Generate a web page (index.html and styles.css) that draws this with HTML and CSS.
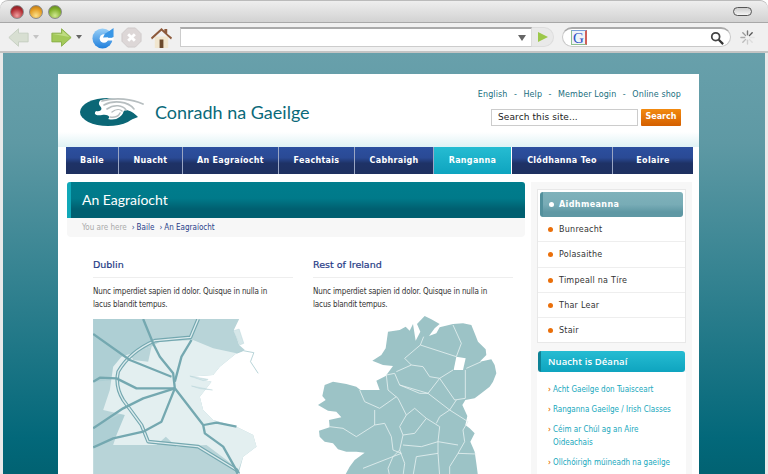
FILE: index.html
```html
<!DOCTYPE html>
<html lang="ga">
<head>
<meta charset="utf-8">
<title>Conradh na Gaeilge</title>
<link rel="stylesheet" href="styles.css">
</head>
<body>
<div class="window">
  <div class="titlebar">
    <div class="lights"><span class="light red"></span><span class="light amber"></span><span class="light green"></span></div>
    <span class="pill"></span>
  </div>
  <div class="toolbar">
    <svg class="tool tool-back" viewBox="0 0 24 24"><path d="M1 12 12 2v5h11v10H12v5z" fill="#d8dfd2" stroke="#c4cdbf"/></svg>
    <span class="caret caret-off"></span>
    <svg class="tool tool-fwd" viewBox="0 0 24 24"><path d="M23 12 12 2v5H1v10h11v5z" fill="#a3c95a" stroke="#86ad45"/><path d="M2 8h11V4l8 7.500z" fill="#bfdc83"/></svg>
    <span class="caret"></span>
    <svg class="tool tool-reload" viewBox="0 0 22 24">
      <defs><linearGradient id="rl" x1="0" y1="0" x2="0" y2="1"><stop offset="0" stop-color="#9ad0f7"/><stop offset="1" stop-color="#1f7fdc"/></linearGradient></defs>
      <circle cx="10.500" cy="13" r="10.500" fill="url(#rl)"/>
      <circle cx="12" cy="13" r="4.500" fill="#fff"/>
      <path d="M11 12 22 11.500V2l-4 3-5 3z" fill="#3a97e6"/>
      <path d="M9 12.500h13v2.500H9z" fill="#fff"/>
    </svg>
    <svg class="tool tool-stop" viewBox="0 0 22 22"><path d="M7 1h8l6 6v8l-6 6H7l-6-6V7z" fill="#ddd7d7" stroke="#cfc9c9"/><path d="m7.500 7.500 7 7m0-7-7 7" stroke="#fff" stroke-width="3"/></svg>
    <svg class="tool tool-home" viewBox="0 0 22 22"><path d="M4 10h14v12H4z" fill="#f1e6cf"/><path d="M9 13h4v9H9z" fill="#6c4a2d"/><path d="M0 11 11 1l3 3V2h3v5l5 4-1 2L11 4 1 13z" fill="#8d5a3c"/></svg>
    <div class="urlbar"><span class="url-arrow"></span></div>
    <div class="go"><span class="go-arrow"></span></div>
    <div class="websearch">
      <span class="g-logo">G</span>
      <svg class="lens" viewBox="0 0 16 16"><circle cx="6.500" cy="6.500" r="4.500" fill="#fff" stroke="#444" stroke-width="2"/><path d="m10 10 5 5" stroke="#333" stroke-width="2.500"/></svg>
    </div>
    <svg class="spinner" viewBox="0 0 16 16"><g stroke-width="1.500" stroke-linecap="round"><path d="M8 1v4" stroke="#777"/><path d="m3 3 3 3" stroke="#999"/><path d="M1 8h4" stroke="#aaa"/><path d="m3 13 3-3" stroke="#bbb"/><path d="M8 15v-4" stroke="#ccc"/><path d="m13 13-3-3" stroke="#ddd"/><path d="M15 8h-4" stroke="#e4e4e4"/><path d="m13 3-3 3" stroke="#555"/></g></svg>
  </div>
  <div class="viewport">
    <div class="card">
      <header class="site-head">
        <a class="brand">
          <svg class="logo" viewBox="0 0 64 30">
            <ellipse cx="28" cy="15" rx="28" ry="14" fill="#0b6776"/>
            <path d="M21 3C36-1 53 1 64 7 60 11 58 16 56 19 52 15 48 13 44 14 42 20 36 24 28 22 31 20 28 17 22 18 16 19 13 17 16 14 21 15 23 12 20 9 18 7 19 4 21 3z" fill="#fff"/>
            <path d="M44 14C47 12 53 15 58 20 50 24 40 25 33 25 39 23 43 19 44 14z" fill="#0b6776"/>
            <g fill="none" stroke="#b7bec0" stroke-linecap="round">
              <path d="M22 4C36 0 52 2 63 7" stroke-width="1.800"/>
              <path d="M24 8C33 3 48 4 54 12" stroke-width="1.600"/>
              <path d="M27 12C34 7 43 8 46 13" stroke-width="1.600"/>
              <path d="M32 15C36 12 40 12 42 14" stroke-width="1.400"/>
              <path d="M30 20C35 21 39 19 40 16" stroke-width="1.400"/>
            </g>
          </svg>
          <span class="brand-name">Conradh na Gaeilge</span>
        </a>
        <div class="head-tools">
          <nav class="util-links"><a>English</a><i>-</i><a>Help</a><i>-</i><a>Member Login</a><i>-</i><a>Online shop</a></nav>
          <form class="site-search">
            <span class="search-input">Search this site...</span>
            <span class="search-btn">Search</span>
          </form>
        </div>
      </header>
      <nav class="main-nav">
        <a>Baile</a><a>Nuacht</a><a>An Eagraíocht</a><a>Feachtais</a><a>Cabhraigh</a><a class="on">Ranganna</a><a>Clódhanna Teo</a><a>Eolaire</a>
      </nav>
      <div class="body-cols">
        <main class="main-col">
          <h1 class="page-title">An Eagraíocht</h1>
          <div class="crumbs"><span class="crumb-lead">You are here</span><a>Baile</a><a>An Eagraíocht</a></div>
          <div class="offices">
            <section class="office">
              <h2>Dublin</h2>
              <p>Nunc imperdiet sapien id dolor. Quisque in nulla in lacus blandit tempus.</p>
              <svg class="map map-dublin" viewBox="40 27 500 465">
                <path d="M40 27H478L462 60 478 105 495 120 470 130 420 170 400 195 330 200 395 215 360 260 370 300 400 330 470 350 520 375 530 410 490 440 476 492H40z" fill="#b8d4d8"/>
                <path d="M40 27H190L215 95 160 150 120 145 105 210 40 215z" fill="#aecfd4"/>
                <path d="M40 350 130 310 185 350 100 380 40 410z" fill="#aecfd4"/>
                <path d="M100 170 125 140 215 110 240 95 340 90 400 115 470 130 420 170 400 195 330 200 395 215 360 260 370 300 400 330 470 350 520 375 530 410 490 440 476 480 440 450 380 405 290 410 258 380 230 405 100 405 110 375 135 315 70 300 90 240z" fill="#e3eff0"/>
                <path d="M215 110 205 155 160 150 150 130z" fill="#b8d4d8"/>
                <path d="M460 62 478 57 492 100 480 105z" fill="#d6e7e9" stroke="#a9cbd0"/>
                <path d="M470 130 490 122 522 128 512 155 535 190" fill="none" stroke="#a9cbd0" stroke-width="2.500"/>
                <path d="M335 228 398 240 360 236z" fill="#d6e7e9" stroke="#a9cbd0"/>
                <path d="M330 198 385 208 370 212z" fill="#d6e7e9" stroke="#a9cbd0"/>
                <g fill="none" stroke="#74a8b0" stroke-linejoin="round">
                  <path d="M355 27 332 82 225 92Q150 125 115 185 105 230 130 270L185 345 205 395 355 410 470 480 476 492" stroke-width="11"/>
                  <path d="M355 27 332 82 225 92Q150 125 115 185 105 230 130 270L185 345 205 395 355 410 470 480 476 492" stroke-width="4" stroke="#dcebed"/>
                  <path d="M190 27 222 105 240 140 280 190 285 235" stroke-width="7"/>
                  <path d="M335 90 305 140 285 215" stroke-width="7"/>
                  <path d="M40 72 150 150 275 200" stroke-width="6.500"/>
                  <path d="M40 215 60 203 110 205 170 235 285 235" stroke-width="7"/>
                  <path d="M40 355 130 295 190 265 285 235" stroke-width="7"/>
                  <path d="M40 412 100 385 190 365 245 335 285 235" stroke-width="7"/>
                  <path d="M285 235 370 345 375 370 430 410 475 490" stroke-width="7"/>
                  <path d="M372 345 410 338 470 350" stroke-width="6.500"/>
                </g>
              </svg>
            </section>
            <section class="office">
              <h2>Rest of Ireland</h2>
              <p>Nunc imperdiet sapien id dolor. Quisque in nulla in lacus blandit tempus.</p>
              <svg class="map map-ireland" viewBox="40 3 600 495">
                <path fill="#9cc3c6" d="M375 18 395 28 420 42 405 55 388 78 410 70 420 52 460 42 490 40 515 45 525 70 535 95 558 118 560 135 540 155 575 148 585 165 590 190 580 215 570 230 545 250 525 265 497 270 488 285 503 318 497 345 510 355 525 370 512 395 525 425 530 460 535 498H135L150 470 165 450 195 428 170 425 140 425 115 418 100 400 75 395 60 380 58 362 90 352 88 330 125 322 110 305 85 302 55 285 78 270 68 258 75 225 100 215 140 222 170 230 182 240 240 240 230 212 258 198 280 168 250 165 218 152 245 135 258 115 265 65 300 60 318 50 330 62 340 42 348 92 362 65 352 42z"/>
                <path fill="#fff" d="M470 140 498 145 490 180 462 180z"/>
                <g fill="none" stroke="#e6f0f0" stroke-width="2.500">
                  <path d="M460 45 485 100 470 140"/>
                  <path d="M372 80 362 105 315 145 335 165 290 185"/>
                  <path d="M362 105 470 140"/>
                  <path d="M335 165 370 170 390 200 420 205 460 180"/>
                  <path d="M500 175 545 155"/>
                  <path d="M497 180 497 265 465 270 420 205 385 250 300 225 285 190 260 195"/>
                  <path d="M300 225 360 250 385 250 450 300 470 270"/>
                  <path d="M260 195 265 240 295 265 320 315 300 350 310 375 300 420 280 440"/>
                  <path d="M180 240 195 275 240 295 290 260"/>
                  <path d="M225 300 225 345 170 380 130 355 90 350"/>
                  <path d="M225 345 255 340 275 380 280 420 305 430 190 475"/>
                  <path d="M320 315 345 295 380 325 345 370 310 375"/>
                  <path d="M380 325 420 350 415 395 365 410 310 405"/>
                  <path d="M450 300 420 320 410 340"/>
                  <path d="M450 300 505 335 490 360 495 395 475 430 530 432"/>
                  <path d="M415 395 475 405"/>
                  <path d="M415 395 415 430 420 498"/>
                  <path d="M300 420 315 460 310 498"/>
                  <path d="M415 430 350 440 340 498"/>
                  <path d="M475 430 450 470 450 498"/>
                  <path d="M280 440 265 475 270 498"/>
                </g>
              </svg>
            </section>
          </div>
        </main>
        <aside class="side-col">
          <ul class="side-menu">
            <li class="on">Aidhmeanna</li>
            <li>Bunreacht</li>
            <li>Polasaithe</li>
            <li>Timpeall na Tíre</li>
            <li>Thar Lear</li>
            <li>Stair</li>
          </ul>
          <h3 class="news-head">Nuacht is Déanaí</h3>
          <ul class="news-list">
            <li>Acht Gaeilge don Tuaisceart</li>
            <li>Ranganna Gaeilge / Irish Classes</li>
            <li>Céim ar Chúl ag an Aire Oideachais</li>
            <li>Ollchóirigh múineadh na gaeilge</li>
          </ul>
        </aside>
      </div>
    </div>
  </div>
</div>
</body>
</html>
```
FILE: styles.css
```css
* { box-sizing: border-box; }
html, body { margin: 0; height: 474px; overflow: hidden; background: #fff; }
body { font-family: "DejaVu Sans", Verdana, sans-serif; font-size: 8px; color: #333; }
a { color: inherit; text-decoration: none; }
ul { list-style: none; margin: 0; padding: 0; }
h1, h2, h3, p { margin: 0; }
svg { display: block; flex: none; }

.window { height: 474px; width: 768px; padding-right: 3px; display: flex; flex-direction: column; background: #e9e9e9; border-radius: 8px 8px 0 0; overflow: hidden; }

.titlebar { height: 23px; flex: none; margin-right: -3px; padding: 5px 8px 0 10px; display: flex; justify-content: space-between; align-items: flex-start; background: linear-gradient(#f0f0f0, #d2d2d2); border-bottom: 1px solid #a8a8a8; border-radius: 8px 8px 0 0; box-shadow: inset 0 1px 0 #bbb; }
.lights { display: flex; gap: 5px; }
.light { width: 14px; height: 14px; border-radius: 50%; border: 1px solid #8a8a8a; }
.red { background: radial-gradient(circle at 50% 80%, #f0a0a0, #b02a30 60%, #6e1f22); }
.amber { background: radial-gradient(circle at 50% 80%, #fbe08a, #e39a20 60%, #a86a14); }
.green { background: radial-gradient(circle at 50% 80%, #d0e890, #7fae28 60%, #567a1c); }
.pill { width: 19px; height: 9px; margin: 2px 8px 0 0; border: 1px solid #555; border-radius: 5px; background: linear-gradient(#ccc, #f4f4f4); }

.toolbar { height: 30px; flex: none; margin-right: -3px; padding-right: 3px; padding-left: 8px; display: flex; align-items: center; background: #f0f0f0; border-bottom: 2px solid #c4c4c4; }
.tool-back { width: 21px; height: 21px; }
.caret { width: 0; height: 0; margin: 0 0 0 4px; border: 3px solid transparent; border-top: 4px solid #666; border-bottom: 0; }
.caret-off { border-top-color: #c4c4c4; margin-right: 12px; }
.tool-fwd { width: 21px; height: 21px; }
.tool-reload { width: 22px; height: 23px; margin-left: 10px; }
.tool-stop { width: 21px; height: 21px; margin-left: 7px; }
.tool-home { width: 21px; height: 21px; margin-left: 9px; }
.urlbar { width: 352px; height: 20px; margin-left: 8px; display: flex; align-items: center; justify-content: flex-end; padding-right: 5px; background: #fff; border: 1px solid #ccc; border-top: 2px solid #aaa; border-right: 1px solid #ddd; }
.url-arrow { border: 4px solid transparent; border-top: 6px solid #666; border-bottom: 0; }
.go { width: 22px; height: 20px; display: flex; align-items: center; padding-left: 6px; background: #e9e9e9; border-radius: 0 10px 10px 0; border: 1px solid #ddd; border-left: 0; }
.go-arrow { border: 5px solid transparent; border-left: 10px solid #9cc84a; border-right: 0; }
.websearch { width: 169px; height: 20px; margin-left: 8px; display: flex; align-items: center; justify-content: space-between; padding: 0 6px 0 8px; background: #fff; border: 1px solid #c8c8c8; border-top: 2px solid #aaa; border-radius: 10px; }
.g-logo { width: 16px; height: 15px; font: 15px/14px "Liberation Serif", serif; color: #2b4fc4; text-align: center; background: #eef3f8; border: 1px solid #8fc08f; border-top-color: #7aa0d8; border-right: 2px solid #d0605a; }
.lens { width: 14px; height: 14px; }
.spinner { width: 15px; height: 15px; margin-left: 9px; }

.viewport { flex: 1; min-height: 0; margin-left: 3px; padding: 21px 0 0 55px; background: linear-gradient(#68a0ab 0, #5e99a4 90px, #03687a 385px, #016272 100%); overflow: hidden; }
.card { width: 641px; height: 420px; background: #fff; border-radius: 4px 4px 0 0; padding: 0 7px 0 8px; }

.site-head { height: 73px; display: flex; justify-content: space-between; background: linear-gradient(#fff 58px, #dff2f5 73px); margin: 0 -7px 0 -8px; padding: 0 18px 0 22px; }
.brand { display: flex; align-items: center; gap: 11px; height: 76px; }
.logo { width: 64px; height: 30px; }
.brand-name { font: 18px/1 Lato, sans-serif; color: #0a6a7a; }
.head-tools { display: flex; flex-direction: column; align-items: flex-end; padding-top: 15px; gap: 8px; }
.util-links { display: flex; gap: 6.500px; color: #1a6f80; line-height: 12px; letter-spacing: .1px; }
.util-links i { font-style: normal; }
.site-search { display: flex; gap: 3px; }
.search-input { width: 147px; height: 17px; padding-left: 6px; border: 1px solid #ccc; font-size: 9px; line-height: 15px; letter-spacing: .1px; color: #222; }
.search-btn { width: 40px; height: 17px; text-align: center; font-weight: bold; font-size: 8px; line-height: 16px; color: #fff; background: linear-gradient(#f28a10, #d45f00); border-radius: 1px; }

.main-nav { display: grid; grid-template-columns: 53px 64px 96px 76px 79px 78px 101px 80px; height: 27px; }
.main-nav a { display: flex; align-items: center; justify-content: center; color: #fff; font-weight: bold; font-size: 8px; letter-spacing: .3px; background: linear-gradient(#2c4f9f 0, #2a4a95 40%, #1e3266 60%, #1e3060 100%); border-right: 1px solid #9aa6c4; }
.main-nav a:last-child { border-right: 0; }
.main-nav a.on { background: linear-gradient(#26bcd2, #0ea4bf); border-right-color: #fff; }

.body-cols { display: flex; margin-top: 8px; gap: 6px; }
.main-col { width: 458px; margin-left: 1px; }
.page-title { height: 36px; padding-left: 11px; font: 400 14px/35px Lato, sans-serif; color: #fff; background: linear-gradient(#007d8d 0, #007a8a 45%, #005f70 75%, #005f70 100%); border-left: 4px solid #10a8b8; border-radius: 3px 3px 0 0; }
.crumbs { height: 19px; display: flex; gap: 5px; padding-left: 15px; background: #f7f7f7; border-radius: 0 0 4px 4px; font-size: 8px; font-stretch: condensed; line-height: 20px; color: #2a3f8a; }
.crumb-lead { color: #aaa; }
.crumbs a::before { content: "\203A"; margin-right: 2px; }
.offices { display: flex; gap: 20px; padding: 21px 0 0 26px; }
.office { width: 200px; }
.office h2 { height: 20px; font-size: 9.500px; line-height: 13px; font-weight: normal; -webkit-text-stroke: .2px #1f3a86; color: #1f3a86; border-bottom: 1px solid #eee; margin-bottom: 8px; }
.office p { width: 180px; line-height: 12.500px; color: #333; font-stretch: condensed; letter-spacing: -.15px; }
.map { margin-top: 8px; }
.map-dublin { width: 167px; height: 155px; }
.map-ireland { width: 200px; height: 165px; margin-top: 0; }

.side-col { width: 161px; height: 300px; padding: 7px 6px 0; background: #f7f7f7; }
.side-menu { background: #fff; border: 1px solid #e8e8e8; padding: 2px 2px 0; height: 154px; }
.side-menu li { height: 25.300px; margin: 0 -2px; padding-left: 21px; line-height: 25px; color: #333; position: relative; border-bottom: 1px solid #eee; letter-spacing: .25px; }
.side-menu li:last-child { border-bottom: 0; }
.side-menu li::before { content: ""; position: absolute; left: 10px; top: 10px; width: 5px; height: 5px; border-radius: 50%; background: #ea6f0a; }
.side-menu li.on { margin: 0; height: 25px; padding-left: 16px; font-weight: bold; letter-spacing: .4px; color: #fff; border: 0; border-left: 3px solid #52909c; border-radius: 3px; background: linear-gradient(#7fb2bb 0, #78acb6 50%, #5f98a4 80%); }
.side-menu li.on::before { left: 6px; background: #fff; }
.news-head { height: 21px; margin: 8px 1px 0; padding-left: 7px; font: 600 9.500px/21px "Open Sans", sans-serif; letter-spacing: .1px; color: #fff; background: linear-gradient(#26bcd2, #0ea4bf); border-left: 3px solid #0d8296; border-radius: 3px; }
.news-list { background: #fff; padding: 11px 6px 0 11px; min-height: 120px; }
.news-list li { margin-bottom: 7px; padding-left: 5px; line-height: 13px; color: #17a8bd; font-stretch: condensed; position: relative; }
.news-list li::before { content: "\203A"; position: absolute; left: 0; top: 0; color: #e8730d; font-weight: bold; }
```
